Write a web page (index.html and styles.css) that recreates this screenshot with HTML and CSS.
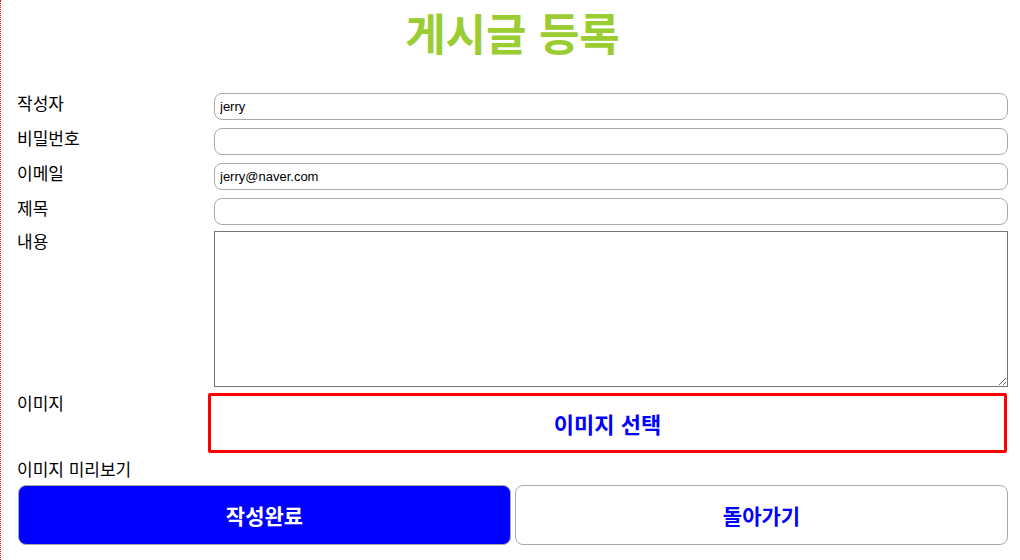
FILE: index.html
```html
<!DOCTYPE html>
<html lang="ko">
<head>
    <meta charset="UTF-8">
    <meta name="viewport" content="width=device-width, initial-scale=1.0">
    <title>게시글 등록</title>
    <link rel="stylesheet" href="styles.css">
</head>
<body>
    <div class="container">
        <h1 class="title">게시글 등록</h1>
        <form class="board-form">
            <div class="row">
                <label for="writer">작성자</label>
                <input type="text" id="writer" value="jerry">
            </div>
            <div class="row">
                <label for="password">비밀번호</label>
                <input type="password" id="password">
            </div>
            <div class="row">
                <label for="email">이메일</label>
                <input type="text" id="email" value="jerry@naver.com">
            </div>
            <div class="row row-tight">
                <label for="subject">제목</label>
                <input type="text" id="subject">
            </div>
            <div class="row row-tight">
                <label for="content">내용</label>
                <textarea id="content"></textarea>
            </div>
            <div class="row row-tight">
                <label>이미지</label>
                <button type="button" class="image-btn">이미지 선택</button>
            </div>
            <div class="preview-label">이미지 미리보기</div>
            <div class="btn-group">
                <button type="submit" class="submit-btn">작성완료</button>
                <button type="button" class="back-btn">돌아가기</button>
            </div>
        </form>
    </div>
</body>
</html>
```

FILE: styles.css
```css
*{
    margin: 0;
    padding: 0;
    box-sizing: border-box;
    font-family: "Noto Sans CJK KR", "Noto Sans", sans-serif;
}
body {
    background: #fff;
}
.container {
    min-height: 560px;
    border-left: 1px dotted red;
    padding: 0 12px 0 16px;
}
.title {
    font-size: 44px;
    font-weight: bold;
    line-height: normal;
    text-align: center;
    color: yellowgreen;
    margin-bottom: 29px;
}
.row {
    display: flex;
    align-items: flex-start;
    margin-bottom: 8px;
}
.row-tight {
    margin-bottom: 6px;
}
.row label, .preview-label {
    width: 197px;
    flex-shrink: 0;
    font-size: 17px;
    line-height: 19px;
    color: #000;
}
.row input {
    flex: 1;
    height: 27px;
    padding: 0 5px;
    border: 1px solid #aaa;
    border-radius: 8px;
    font-family: "Liberation Sans", Arial, sans-serif;
    font-size: 13px;
    color: #000;
}
.row textarea {
    flex: 1;
    height: 156px;
    border: 1px solid #767676;
    resize: vertical;
}
.image-btn {
    flex: 1;
    height: 60px;
    margin-left: -6px;
    margin-right: 1px;
    background: #fff;
    border: 3px solid red;
    border-radius: 2px;
    color: blue;
    font-size: 22px;
    font-weight: bold;
    cursor: pointer;
}
.preview-label {
    width: auto;
    margin-bottom: 7px;
}
.btn-group {
    display: flex;
    gap: 4px;
    padding-left: 1px;
}
.submit-btn, .back-btn {
    flex: 1;
    height: 60px;
    border: 1px solid #aaa;
    border-radius: 8px;
    font-size: 21px;
    font-weight: bold;
    cursor: pointer;
}
.submit-btn {
    background: blue;
    color: #fff;
}
.back-btn {
    background: #fff;
    color: blue;
}
```
